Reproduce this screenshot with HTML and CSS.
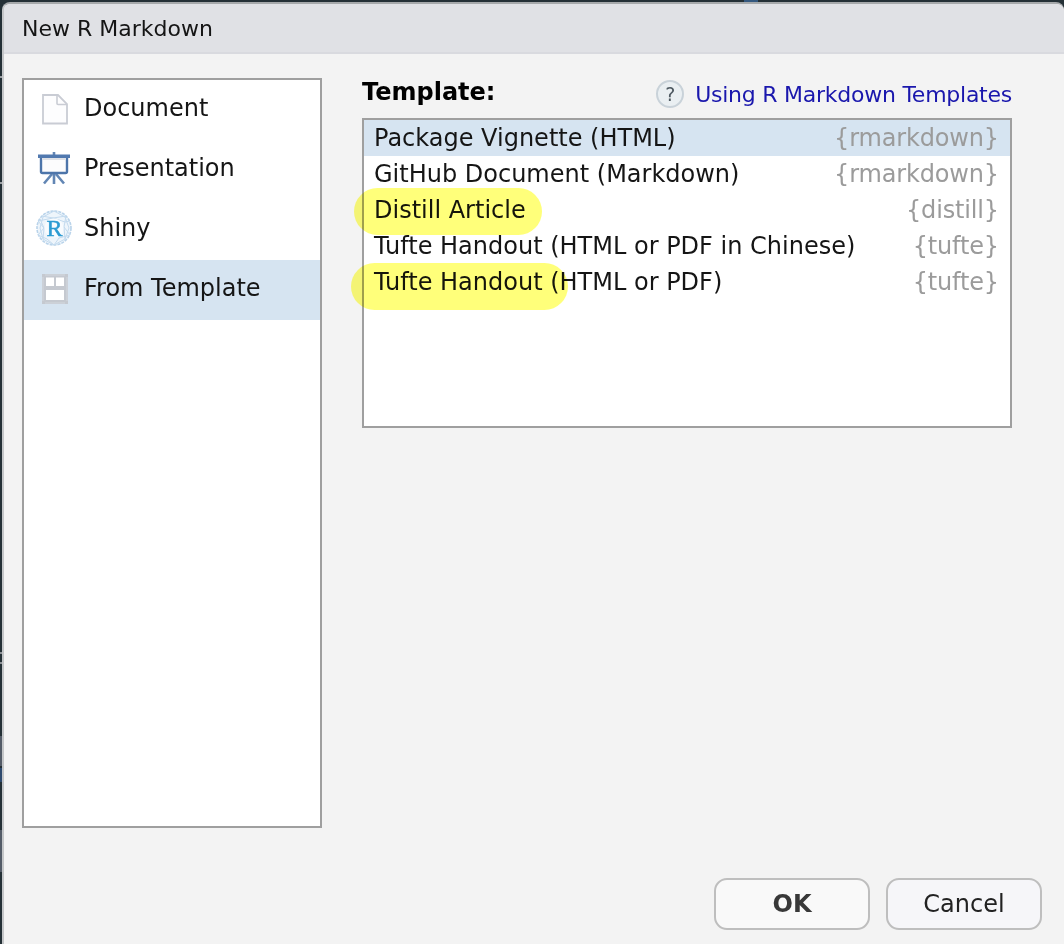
FILE: index.html
```html
<!DOCTYPE html>
<html lang="en">
<head>
<meta charset="utf-8">
<title>New R Markdown</title>
<link rel="stylesheet" href="styles.css">
</head>
<body>
<div class="dialog">
  <header class="titlebar">New R Markdown</header>
  <main class="content">
    <nav class="sidebar">
      <div class="tab">
        <svg class="tab-icon" viewBox="0 0 36 36"><path d="M7 5H22L31 14V33.500H7Z" fill="#fdfdfe" stroke="#c9ccd4" stroke-width="1.800"/><path d="M21 5V13.500Q21 14.500 22 14.500H31" fill="none" stroke="#c9ccd4" stroke-width="1.600"/></svg>
        <span>Document</span>
      </div>
      <div class="tab">
        <svg class="tab-icon" viewBox="0 0 36 36"><path d="M18 2V5M18 24V34M16 24L8 33.500M20 24L28 33.500" fill="none" stroke="#6286b4" stroke-width="2.600"/><path d="M5 8V21.500Q5 23 6.500 23H29.500Q31 23 31 21.500V8" fill="#fcfcfd" stroke="#4d75aa" stroke-width="2.400"/><path d="M6.500 8H29.500V10H6.500Z" fill="#dfe1e6"/><path d="M2 4.500H34V8H2Z" fill="#5179af"/></svg>
        <span>Presentation</span>
      </div>
      <div class="tab">
        <svg class="tab-icon" viewBox="0 0 36 36"><circle cx="18" cy="18" r="17" fill="#eef5fb" stroke="#b9d3ea" stroke-width="1.600" stroke-dasharray="3 1"/><g fill="none" stroke="#c3daee" stroke-width="1"><path d="M18 1L7 7L4 18L7 29L18 35L29 29L33 18L29 7Z"/><path d="M6 6L17 8L30 6L28 17L34 25L23 28L18 35L11 29L2 25L8 18L2 11L17 8L29 12L34 11M7 29L8 18L4 9M29 29L28 17"/></g><circle cx="18" cy="18" r="9.500" fill="#f8fbfe"/><text class="r-mark" x="18.500" y="26" text-anchor="middle">R</text></svg>
        <span>Shiny</span>
      </div>
      <div class="tab selected">
        <svg class="tab-icon" viewBox="0 0 36 36"><path d="M6 4H32V34H6Z" fill="#c5c9d0"/><path d="M10 7.500H18V16H10ZM20 7.500H28V16H20ZM10 20H28V30H10Z" fill="#fff"/><path d="M7 7V31M31 7V31M9 5H29M9 33H29" stroke="#d3d8df" fill="none"/></svg>
        <span>From Template</span>
      </div>
    </nav>
    <section class="panel">
      <div class="panel-head">
        <strong class="label">Template:</strong>
        <a class="help"><span class="help-icon">?</span><span class="help-text">Using R Markdown Templates</span></a>
      </div>
      <div class="list">
        <div class="row selected"><span>Package Vignette (HTML)</span><span class="pkg">{rmarkdown}</span></div>
        <div class="row"><span>GitHub Document (Markdown)</span><span class="pkg">{rmarkdown}</span></div>
        <div class="row"><span>Distill Article</span><span class="pkg">{distill}</span></div>
        <div class="row"><span>Tufte Handout (HTML or PDF in Chinese)</span><span class="pkg">{tufte}</span></div>
        <div class="row"><span>Tufte Handout (HTML or PDF)</span><span class="pkg">{tufte}</span></div>
        <i class="marker marker-distill"></i>
        <i class="marker marker-tufte"></i>
      </div>
    </section>
  </main>
  <footer class="actions">
    <button class="btn primary">OK</button>
    <button class="btn">Cancel</button>
  </footer>
</div>
</body>
</html>
```
FILE: styles.css
```css
* { box-sizing: border-box; }
body {
  margin: 0;
  height: 944px;
  overflow: hidden;
  padding: 2px 0 0 2px;
  background:
    linear-gradient(#34587f, #34587f) 744px 0 / 14px 2px no-repeat,
    linear-gradient(#9a9fa3, #9a9fa3) 0 76px / 2px 2px no-repeat,
    linear-gradient(#9a9fa3, #9a9fa3) 0 182px / 2px 2px no-repeat,
    linear-gradient(#8b9095, #8b9095) 0 652px / 2px 2px no-repeat,
    linear-gradient(#8b9095, #8b9095) 0 662px / 2px 2px no-repeat,
    linear-gradient(#535b67, #535b67) 0 736px / 2px 30px no-repeat,
    linear-gradient(#2e4a6e, #2e4a6e) 0 768px / 2px 14px no-repeat,
    linear-gradient(#535b67, #535b67) 0 830px / 2px 42px no-repeat,
    #243036;
  font-family: "DejaVu Sans", sans-serif;
  font-size: 24px;
  color: #151515;
}
.dialog {
  height: 942px;
  display: flex;
  flex-direction: column;
  background: #f3f3f3;
  border: solid #a6a9ab;
  border-width: 2px 0 0 2px;
  border-left-color: #c4c6c8;
  border-radius: 8px 8px 0 0;
  overflow: hidden;
}
.titlebar {
  height: 50px;
  padding-left: 18px;
  line-height: 50px;
  font-size: 22px;
  background: #e0e1e5;
  border-bottom: 2px solid #d9dadf;
}
.content {
  display: flex;
  gap: 40px;
  padding: 24px 0 0 18px;
}
.sidebar {
  width: 300px;
  height: 750px;
  background: #fff;
  border: 2px solid #9f9f9f;
}
.tab {
  height: 60px;
  display: flex;
  align-items: center;
  gap: 12px;
  padding: 0 0 4px 12px;
}
.tab-icon { width: 36px; height: 36px; }
.r-mark {
  font: 24px "Liberation Serif", serif;
  fill: #2c9bd2;
  stroke: #2c9bd2;
  stroke-width: 0.5px;
}
.selected { background: #d6e4f1; }
.panel { width: 650px; }
.panel-head {
  height: 40px;
  display: flex;
  justify-content: space-between;
}
.label { color: #000; line-height: 28px; }
.help {
  display: flex;
  gap: 11px;
  height: 32px;
  align-items: center;
  color: #1a17ad;
  font-size: 22px;
}
.help-text { letter-spacing: -0.25px; }
.help-icon {
  width: 28px;
  height: 28px;
  border: 2px solid #c9d2d9;
  border-radius: 50%;
  background: #eaeff2;
  color: #4e5961;
  font-size: 19px;
  line-height: 24px;
  text-align: center;
}
.list {
  position: relative;
  height: 310px;
  background: #fff;
  border: 2px solid #9f9f9f;
}
.row {
  height: 36px;
  display: flex;
  justify-content: space-between;
  padding: 0 11px 0 10px;
  line-height: 36px;
}
.pkg { color: #9b9b9b; letter-spacing: -0.15px; }
.marker {
  position: absolute;
  height: 47px;
  border-radius: 24px;
  background: #ffff7a;
  mix-blend-mode: multiply;
}
.marker-distill { left: -10px; top: 68px; width: 188px; }
.marker-tufte { left: -13px; top: 143px; width: 217px; }
.actions {
  display: flex;
  justify-content: flex-end;
  gap: 16px;
  padding: 50px 22px 0 0;
}
.btn {
  width: 156px;
  height: 52px;
  padding: 0;
  border: 2px solid #bebebe;
  border-radius: 13px;
  background: #f6f6f9;
  font: 24px "DejaVu Sans", sans-serif;
  color: #222;
}
.primary { font-weight: bold; background: #f9f9f9; color: #383838; }
```
